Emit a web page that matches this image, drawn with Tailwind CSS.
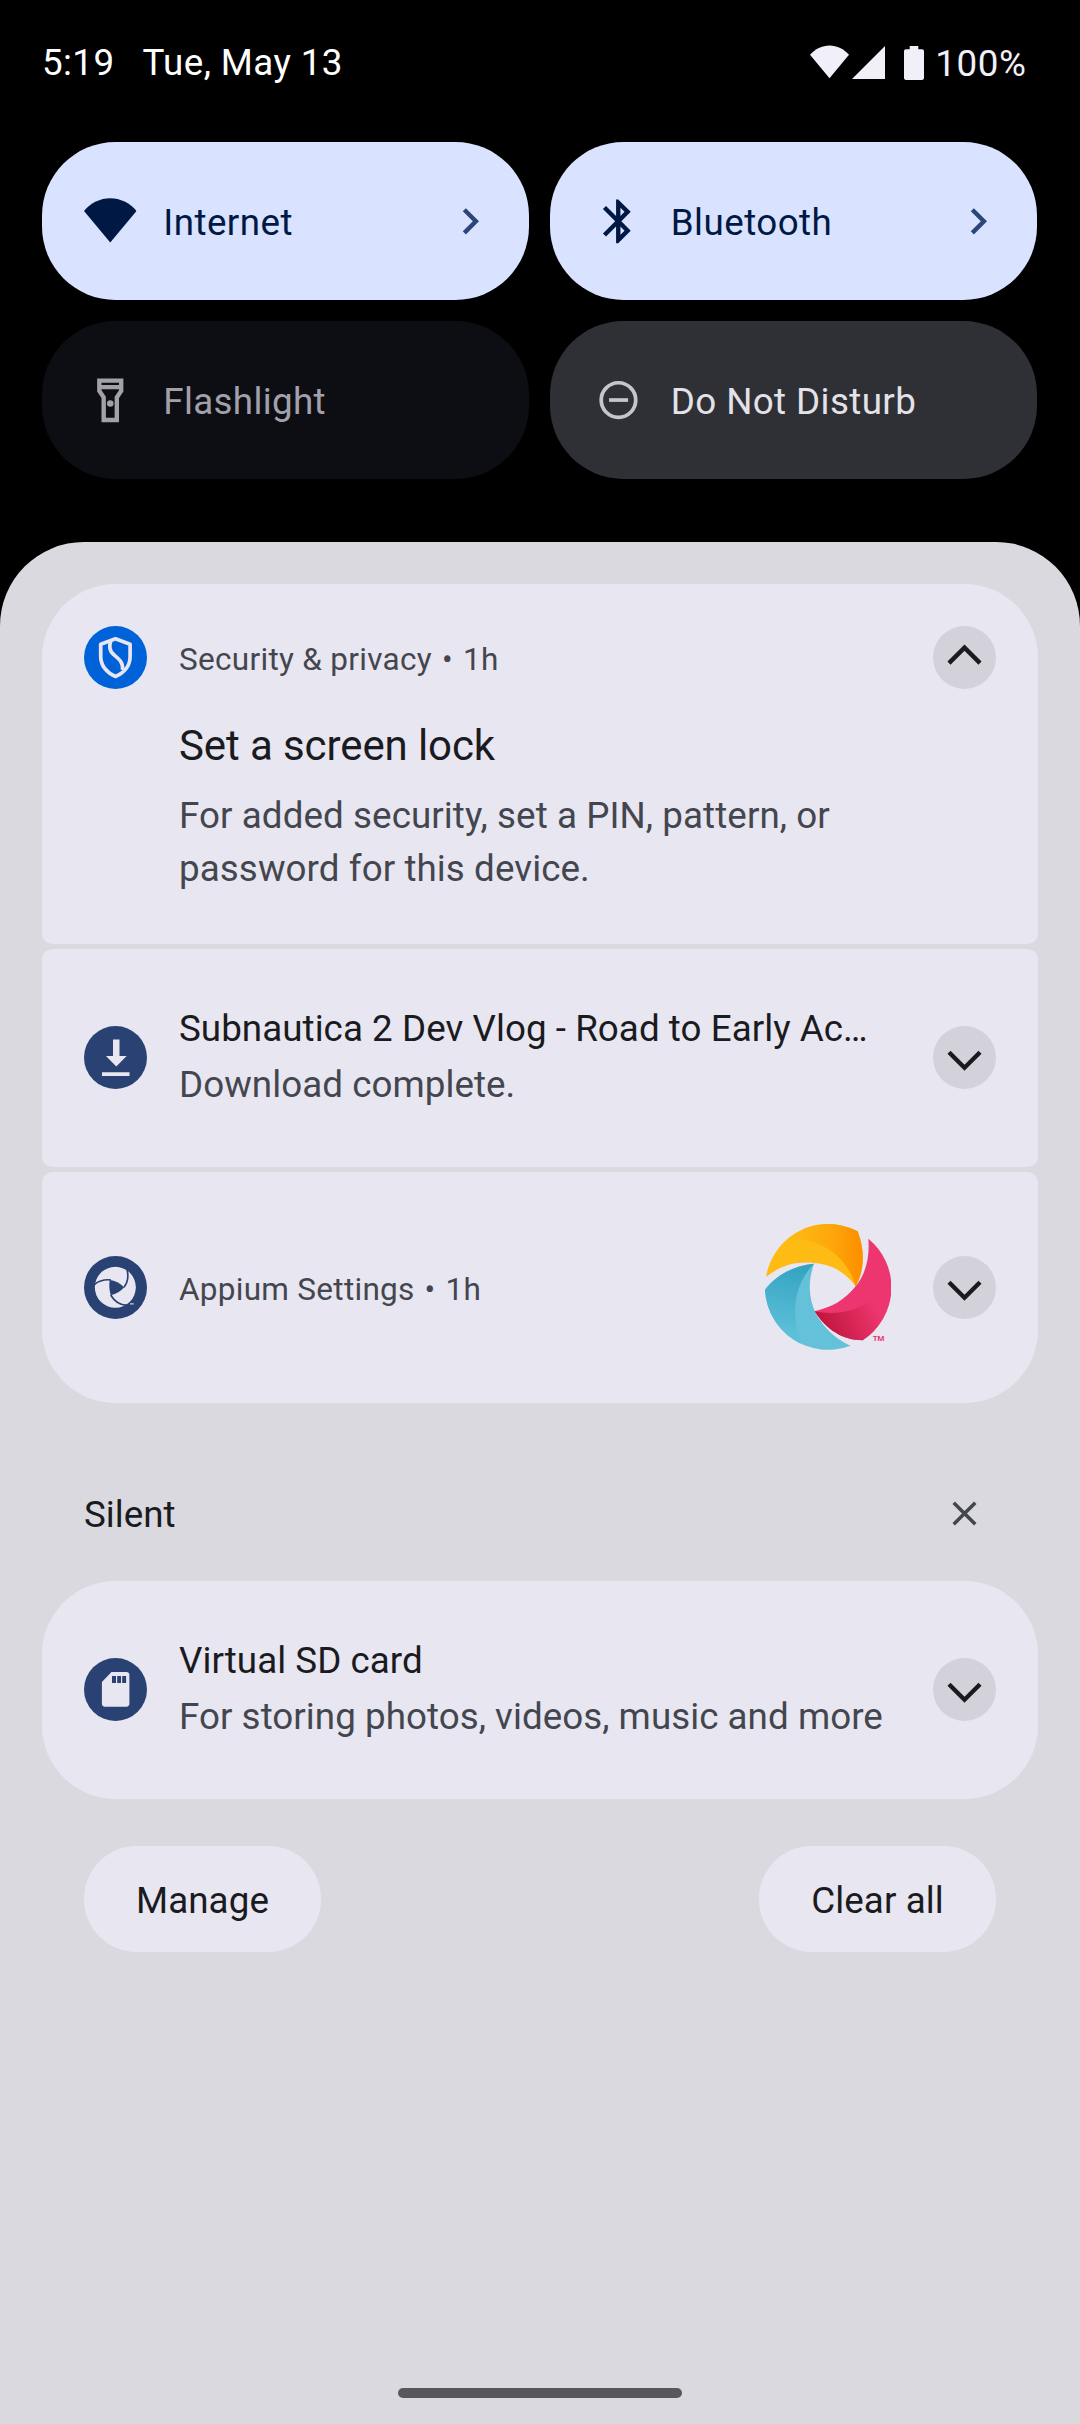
<!DOCTYPE html>
<html lang="en">
<head>
<meta charset="utf-8">
<title>Notifications</title>
<script src="https://cdn.jsdelivr.net/npm/@tailwindcss/browser@4"></script>
</head>
<body class="flex h-[2424px] w-[1080px] flex-col overflow-hidden bg-black font-[Roboto,sans-serif] text-[36.75px] text-[#1a1b20]">

<!-- Shared glyphs -->
<svg class="hidden">
  <symbol id="wifi" viewBox="0 0 24 24"><path d="M12 21.7 24 7.3C20.9 3.6 16.6 1.5 12 1.5S3.1 3.6 0 7.3z"/></symbol>
  <symbol id="chevron" viewBox="0 0 24 24"><path d="M8.59 16.59 13.17 12 8.59 7.41 10 6l6 6-6 6z"/></symbol>
  <symbol id="down" viewBox="0 0 63 63"><circle cx="31.5" cy="31.5" r="31.5" fill="#d3d1da"/><path d="M16 26.2 31.5 41.7 47 26.2" fill="none" stroke="#1a1b20" stroke-width="4.4"/></symbol>
</svg>

<header class="flex h-[125px] items-center justify-between pl-[42px] pr-[53.5px] tracking-[0.4px]">
  <div class="flex gap-[28px] text-white"><span>5:19</span><span>Tue, May 13</span></div>
  <div class="flex items-center text-[#f1eff7]">
    <svg class="h-[39px] w-[39px]" fill="currentColor"><use href="#wifi"/></svg>
    <svg class="ml-[3px] h-[33px] w-[33px]" viewBox="0 0 33 33" fill="currentColor"><path d="M0 33 33 0v33z"/></svg>
    <svg class="ml-[19px] h-[34px] w-5" viewBox="0 0 20 34" fill="currentColor"><path d="M5.7 0h8.6v3.3h3.8c1.1 0 1.9.8 1.9 1.9v26.9c0 1.1-.8 1.9-1.9 1.9H1.9C.8 34 0 33.2 0 32.1V5.2c0-1.1.8-1.9 1.9-1.9h3.8z"/></svg>
    <span class="ml-[11px] pt-0.5 tracking-[0.6px]">100%</span>
  </div>
</header>

<section class="mx-[42px] mt-[17px] grid grid-cols-[487px_487px] gap-x-[21px] gap-y-[21px] tracking-[0.45px]">
  <div class="flex h-[158px] items-center rounded-[73.5px] bg-[#d9e2ff] pl-[42px] pr-[33px] text-[#001944]">
    <svg class="h-[52.5px] w-[52.5px]" fill="currentColor"><use href="#wifi"/></svg>
    <span class="ml-[26.75px] flex-1 pt-[3px]">Internet</span>
    <svg class="h-[52.5px] w-[52.5px]" fill="#2b4678"><use href="#chevron"/></svg>
  </div>
  <div class="flex h-[158px] items-center rounded-[73.5px] bg-[#d9e2ff] pl-[42px] pr-[33px] text-[#001944]">
    <svg class="h-[52.5px] w-[52.5px]" viewBox="0 0 24 24" fill="currentColor"><path d="M17.71 7.71 12 2h-1v7.59L6.41 5 5 6.41 10.59 12 5 17.59 6.41 19 11 14.41V22h1l5.71-5.71-4.3-4.29zM13 5.83l1.88 1.88L13 9.59zM14.88 16.29 13 18.17v-3.76z"/></svg>
    <span class="ml-[26.25px] flex-1 pt-[3px]">Bluetooth</span>
    <svg class="h-[52.5px] w-[52.5px]" fill="#2b4678"><use href="#chevron"/></svg>
  </div>
  <div class="flex h-[158px] items-center rounded-[73.5px] bg-[#0d0e13] pl-[42px] text-[#a2a1ab]">
    <svg class="h-[52.5px] w-[52.5px]" viewBox="0 0 24 24" fill="currentColor" fill-rule="evenodd"><path d="M18 2H6v6l2 3v11h8V11l2-3zM16 4v1H8V4zM14 10.4V20h-4v-9.6L8 7.4V7h8v.4z"/><circle cx="12" cy="13.5" r="1.5"/></svg>
    <span class="ml-[26.75px] pt-[3px] tracking-[0.35px]">Flashlight</span>
  </div>
  <div class="flex h-[158px] items-center rounded-[73.5px] bg-[#2f3036] pl-[42px] text-[#e3e2e9]">
    <svg class="h-[52.5px] w-[52.5px]" viewBox="0 0 24 24" fill="none" stroke="#c5c4d0"><circle cx="12.1" cy="11.9" r="7.9" stroke-width="1.7"/><path d="M7.8 11.9h8.7" stroke-width="1.7"/></svg>
    <span class="ml-[26.25px] pt-[3px] tracking-[0.4px]">Do Not Disturb</span>
  </div>
</section>

<main class="mt-[63px] flex flex-1 flex-col rounded-t-[84px] bg-[#dad9df] px-[42px] pt-[42px]">
  <div class="flex flex-col gap-[5px]">
    <article class="h-[360px] rounded-b-[10.5px] rounded-t-[73.5px] bg-[#e8e6f0] px-[42px] pt-[42px]">
      <div class="flex h-[63px] items-center">
        <svg class="h-[63px] w-[63px]" viewBox="0 0 63 63"><circle cx="31.5" cy="31.5" r="31.5" fill="#0062d9"/>
          <g fill="none" stroke="#e8e6f0" stroke-width="3.7" stroke-linejoin="round"><path d="M31.5 12.8 16.7 18.3v12.2c0 9.3 6.3 16.5 14.8 20 8.5-3.5 14.6-10.7 14.6-20V18.3z"/><path d="M26.6 15.5c-1.9 5.5-1.3 9.3 3 13 5.6 4.7 9.6 7.5 9 15.5"/></g></svg>
        <div class="ml-[32px] flex flex-1 gap-[10px] pt-[4px] text-[31.5px] tracking-[0.3px] text-[#44464f]"><span>Security &amp; privacy</span><span>•</span><span>1h</span></div>
        <svg class="h-[63px] w-[63px]" viewBox="0 0 63 63"><circle cx="31.5" cy="31.5" r="31.5" fill="#d3d1da"/><path d="M16 37.1 31.5 21.6 47 37.1" fill="none" stroke="#1a1b20" stroke-width="4.4"/></svg>
      </div>
      <h2 class="ml-[95px] mt-[32px] text-[42px] leading-[50px] tracking-[-0.1px]">Set a screen lock</h2>
      <p class="ml-[95px] mt-[18px] leading-[53px] tracking-[0.08px] text-[#44464f]">For added security, set a PIN, pattern, or<br>password for this device.</p>
    </article>

    <article class="flex h-[218px] items-center rounded-[10.5px] bg-[#e8e6f0] px-[42px]">
      <svg class="-mt-px h-[63px] w-[63px]" viewBox="0 0 63 63"><circle cx="31.5" cy="31.5" r="31.5" fill="#294173"/><path fill="#e8e6f0" d="M29 13.5h6.5V30h7.2L32.3 40.5 22 30h7zM18 46.2h27.5v3.7H18z"/></svg>
      <div class="ml-[32px] min-w-0 flex-1 pb-0.5 leading-[56px] tracking-[0.05px]"><h2>Subnautica 2 Dev Vlog - Road to Early Ac…</h2><p class="text-[#44464f]">Download complete.</p></div>
      <svg class="-mt-px h-[63px] w-[63px]"><use href="#down"/></svg>
    </article>

    <article class="flex h-[231px] items-center rounded-b-[73.5px] rounded-t-[10.5px] bg-[#e8e6f0] px-[42px]">
      <svg class="h-[63px] w-[63px]" viewBox="72 78 189 189"><circle cx="166.5" cy="172.5" r="94.5" fill="#294173"/><circle cx="166" cy="172" r="61.5" fill="#e8e6f0"/>
        <path d="M149 150q24 2 43.5 22-16 19-40 24-7-22-3.5-46z" fill="#294173"/>
        <g fill="none" stroke="#294173"><path d="M103 164q20-17 50-14" stroke-width="4.5"/><path d="M201 118q8 32-9 54" stroke-width="5"/><path d="M152 195q18 30 48 31" stroke-width="5"/></g>
        <path d="M195 224q14-2 20-12l10 2v22h-38z" fill="#294173"/><path d="M210 219h11v5h-11z" fill="#a3adc5"/></svg>
      <div class="ml-[32px] flex flex-1 gap-[10px] pt-[4px] text-[31.5px] tracking-[0.28px] text-[#44464f]"><span>Appium Settings</span><span>•</span><span>1h</span></div>
      <svg class="-mt-px mr-[42px] h-[126px] w-[126px]" viewBox="75 192 378 378">
        <defs>
          <linearGradient id="or" x1="180" x2="368" y1="0" y2="0" gradientUnits="userSpaceOnUse"><stop stop-color="#fdb713"/><stop offset=".5" stop-color="#fea70c"/><stop offset=".9" stop-color="#fd9200"/></linearGradient>
          <linearGradient id="te" x1="175" x2="140" y1="320" y2="520" gradientUnits="userSpaceOnUse"><stop stop-color="#35a4c0"/><stop offset="1" stop-color="#5cc0d9"/></linearGradient>
          <linearGradient id="re" x1="245" x2="405" y1="500" y2="430" gradientUnits="userSpaceOnUse"><stop stop-color="#c0153d"/><stop offset="1" stop-color="#ed366f"/></linearGradient>
        </defs>
        <path fill="#fdbb13" d="M78 351A189 189 0 0 1 353 214C375 270 374 331 347 379C314 334 271 312 222 309C168 303 122 316 78 351z"/>
        <path fill="url(#or)" d="M146 234A189 189 0 0 1 353 214C375 270 374 331 347 379C318 278 230 232 146 237z"/>
        <path fill="#64c1da" d="M222 311C202 370 207 420 228 461C254 507 288 537 331 557A189 189 0 0 1 75 389C112 342 165 316 222 311z"/>
        <path fill="url(#te)" d="M222 311C165 316 112 342 75 389A189 189 0 0 0 182 551C155 468 155 382 222 311z"/>
        <path fill="#ed366f" d="M385 236A189 189 0 0 1 368 541C309 541 258 509 224 454C275 442 315 420 347 379C377 343 390 290 385 236z"/>
        <path fill="url(#re)" d="M224 454C303 470 376 447 419 397L440 450A189 189 0 0 1 368 541C309 541 258 509 224 454z"/>
        <text x="398" y="542" textLength="35" lengthAdjust="spacingAndGlyphs" font-size="21" font-weight="700" fill="#ed366f">TM</text>
      </svg>
      <svg class="h-[63px] w-[63px]"><use href="#down"/></svg>
    </article>
  </div>

  <div class="mb-[31px] mt-[75px] flex h-[72px] items-center justify-between px-[42px]">
    <h3 class="pt-px">Silent</h3>
    <svg class="-mt-px h-[63px] w-[63px]" viewBox="0 0 63 63"><path d="M20.7 20.7l21.6 21.6M42.3 20.7 20.7 42.3" stroke="#44464f" stroke-width="3.5"/></svg>
  </div>

  <article class="flex h-[218px] items-center rounded-[73.5px] bg-[#e8e6f0] px-[42px]">
    <svg class="-mt-px h-[63px] w-[63px]" viewBox="0 0 63 63"><circle cx="31.5" cy="31.5" r="31.5" fill="#294173"/><path fill="#e8e6f0" d="M27.5 14H42.5c1.7 0 2.9 1.2 2.9 2.9v28.9c0 1.7-1.2 2.9-2.9 2.9H20.8c-1.7 0-2.9-1.2-2.9-2.9V24z"/><path fill="#294173" d="M28 18h4v7h-4zM33.2 18h3.8v7h-3.8zM38.2 18h3.9v7h-3.9z"/></svg>
    <div class="ml-[32px] min-w-0 flex-1 pb-0.5 leading-[56px] tracking-[0.04px]"><h2>Virtual SD card</h2><p class="text-[#44464f]">For storing photos, videos, music and more</p></div>
    <svg class="-mt-px h-[63px] w-[63px]"><use href="#down"/></svg>
  </article>

  <div class="mt-[47px] flex justify-between px-[42px] tracking-[0.1px]">
    <button class="h-[106px] w-[237px] rounded-[52.5px] bg-[#e8e6f0] pt-[3px]">Manage</button>
    <button class="h-[106px] w-[237px] rounded-[52.5px] bg-[#e8e6f0] pt-[3px]">Clear all</button>
  </div>

  <div class="mb-[26px] mt-auto h-[10px] w-[284px] self-center rounded-full bg-[#58585a]"></div>
</main>
</body>
</html>
